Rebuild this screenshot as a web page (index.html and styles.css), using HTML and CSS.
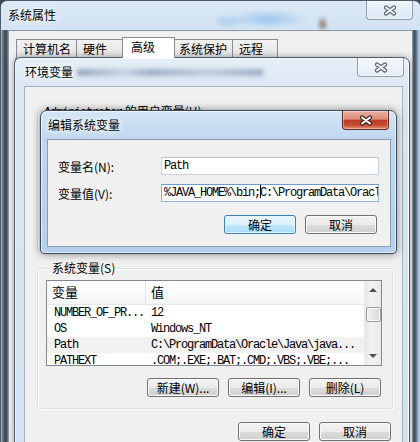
FILE: index.html
```html
<!DOCTYPE html>
<html lang="zh-CN">
<head>
  <meta charset="UTF-8" />
  <meta name="viewport" content="width=device-width, initial-scale=1.0" />
  <title>编辑系统变量</title>
  <link rel="stylesheet" href="styles.css">
</head>
<body>
  <div class="desktop">

    <!-- 系统属性 (back window) -->
    <div class="win win-sys">
      <div class="titlebar">
        <span class="title">系统属性</span>
        <span class="glare"></span>
        <button class="close">
          <svg width="14" height="11" viewBox="0 0 14 11"><path d="M3 2.5 L11 8.5 M11 2.5 L3 8.5" stroke="#5b6470" stroke-width="4.2" stroke-linecap="round"/><path d="M3 2.5 L11 8.5 M11 2.5 L3 8.5" stroke="#f4f6f8" stroke-width="2" stroke-linecap="round"/></svg>
        </button>
      </div>
      <div class="client sys-client">
        <div class="tabs">
          <span class="tab">计算机名</span>
          <span class="tab">硬件</span>
          <span class="tab selected">高级</span>
          <span class="tab">系统保护</span>
          <span class="tab">远程</span>
        </div>
        <div class="tab-panel"></div>
      </div>
    </div>

    <!-- 环境变量 -->
    <div class="win win-env">
      <div class="titlebar">
        <span class="title">环境变量</span>
        <span class="smudge"></span>
        <button class="close">
          <svg width="14" height="11" viewBox="0 0 14 11"><path d="M3 2.5 L11 8.5 M11 2.5 L3 8.5" stroke="#5b6470" stroke-width="4.2" stroke-linecap="round"/><path d="M3 2.5 L11 8.5 M11 2.5 L3 8.5" stroke="#f4f6f8" stroke-width="2" stroke-linecap="round"/></svg>
        </button>
      </div>
      <div class="client env-client">
        <fieldset class="group user-group">
          <legend><span class="mono">Administrator</span> 的用户变量(U)</legend>
        </fieldset>

        <fieldset class="group sys-group">
          <legend>系统变量(S)</legend>
          <div class="listview">
            <div class="lv-main">
              <div class="lv-head">
                <span class="col1">变量</span>
                <span class="col2">值</span>
              </div>
              <div class="lv-row"><span class="col1 mono">NUMBER_OF_PR...</span><span class="col2 mono">12</span></div>
              <div class="lv-row"><span class="col1 mono">OS</span><span class="col2 mono">Windows_NT</span></div>
              <div class="lv-row selected"><span class="col1 mono">Path</span><span class="col2 mono">C:\ProgramData\Oracle\Java\java...</span></div>
              <div class="lv-row"><span class="col1 mono">PATHEXT</span><span class="col2 mono">.COM;.EXE;.BAT;.CMD;.VBS;.VBE;...</span></div>
            </div>
            <div class="vscroll">
              <span class="arrow up"></span>
              <span class="thumb"></span>
              <span class="arrow down"></span>
            </div>
          </div>
          <div class="btn-row group-btns">
            <button class="btn">新建(W)...</button>
            <button class="btn">编辑(I)...</button>
            <button class="btn">删除(L)</button>
          </div>
        </fieldset>

        <div class="btn-row env-btns">
          <button class="btn">确定</button>
          <button class="btn">取消</button>
        </div>
      </div>
    </div>

    <!-- 编辑系统变量 (active dialog) -->
    <div class="win win-edit">
      <div class="titlebar">
        <span class="title">编辑系统变量</span>
        <button class="close close-active">
          <svg width="14" height="11" viewBox="0 0 14 11"><path d="M3 2.5 L11 8.5 M11 2.5 L3 8.5" stroke="#3b2622" stroke-width="4.2" stroke-linecap="round"/><path d="M3 2.5 L11 8.5 M11 2.5 L3 8.5" stroke="#ffffff" stroke-width="2" stroke-linecap="round"/></svg>
        </button>
      </div>
      <div class="client edit-client">
        <div class="field-grid">
          <label class="field-label">变量名(N):</label>
          <div class="textbox mono">Path</div>
          <label class="field-label">变量值(V):</label>
          <div class="textbox mono focused">%JAVA_HOME%\bin;<span class="caret"></span>C:\ProgramData\Oracle\Java\javapath</div>
        </div>
        <div class="btn-row edit-btns">
          <button class="btn btn-default">确定</button>
          <button class="btn">取消</button>
        </div>
      </div>
    </div>

  </div>
</body>
</html>
```

FILE: styles.css
```css
/* Global */
* {
  box-sizing: border-box;
}
body {
  margin: 0;
  font-family: "Noto Sans CJK SC", sans-serif;
  font-size: 12px;
  color: #000;
  background: #3a4450;
}
.desktop {
  position: relative;
  width: 420px;
  height: 442px;
  overflow: hidden;
}
.mono {
  font-family: "Liberation Mono", "Noto Sans CJK SC", monospace;
  font-size: 12px;
  letter-spacing: -1.2px;
}

/* Window frames */
.win {
  position: absolute;
  display: flex;
  flex-direction: column;
  border: 1px solid #4d5a69;
  border-radius: 7px 7px 0 0;
}
.titlebar {
  height: 28px;
  display: flex;
  align-items: flex-start;
  flex-shrink: 0;
}
.title {
  line-height: 28px;
  white-space: nowrap;
  text-shadow: 0 0 5px #fff, 0 0 8px #fff;
}
.close {
  margin-left: auto;
  width: 47px;
  height: 19px;
  padding: 0;
  display: flex;
  align-items: center;
  justify-content: center;
  border: 1px solid rgba(70, 85, 105, 0.55);
  border-top: none;
  border-radius: 0 0 4px 4px;
  background: linear-gradient(rgba(255, 255, 255, 0.55), rgba(255, 255, 255, 0.15));
  box-shadow: inset 0 0 0 1px rgba(255, 255, 255, 0.5);
}
.close-active {
  border-color: #5b2a22;
  background: linear-gradient(#eab0a2 0, #dc8a76 45%, #bd3c24 52%, #c54a30 78%, #e39478 100%);
  box-shadow: inset 0 0 0 1px rgba(255, 220, 210, 0.45);
}
.client {
  flex: 1;
  background: #f0f0f0;
}

/* System properties (outer) */
.win-sys {
  left: 0;
  top: 0;
  width: 421px;
  height: 470px;
  background:
    linear-gradient(90deg, #b9c2cb 0, #5c6773 2px, #3b4652 5px, #8793a0 8px) left top / 8px 100% no-repeat,
    linear-gradient(90deg, #9aa8b5 0, #3c4652 2px, #5e6d7d 4px, #aecbe3 7px) right top / 8px 100% no-repeat,
    #4a5663;
}
.win-sys .titlebar {
  height: 29px;
  border-radius: 6px 6px 0 0;
  background: linear-gradient(#dce9f6, #d2e3f3);
}
.win-sys .title {
  padding-left: 7px;
}
.glare {
  margin-left: 160px;
  width: 130px;
  height: 29px;
  background:
    radial-gradient(ellipse 40px 9px at 40% 62%, rgba(130, 185, 232, 0.7), transparent),
    radial-gradient(ellipse 18px 8px at 8% 70%, rgba(150, 195, 235, 0.6), transparent),
    radial-gradient(ellipse 6px 9px at 82% 80%, rgba(120, 85, 60, 0.7), transparent);
  filter: blur(1px);
}
.win-sys .close {
  margin-left: auto;
  margin-right: 7px;
}
.sys-client {
  margin: 0 7px;
  border: 1px solid #8a96a3;
  border-bottom: none;
  display: flex;
  flex-direction: column;
}
.tabs {
  display: flex;
  align-items: flex-end;
  height: 27px;
  padding-left: 7px;
}
.tab {
  height: 19px;
  line-height: 18px;
  padding-left: 6px;
  border: 1px solid #898c95;
  border-bottom: none;
  margin-right: -1px;
  background: linear-gradient(#f2f2f2, #e3e3e3);
  white-space: nowrap;
}
.tab:nth-child(1) { width: 61px; }
.tab:nth-child(2) { width: 47px; }
.tab:nth-child(3) { width: 53px; }
.tab:nth-child(4) { width: 59px; padding-left: 4px; }
.tab:nth-child(5) { width: 46px; }
.tab.selected {
  height: 21px;
  line-height: 18px;
  padding-left: 8px;
  background: #fff;
  position: relative;
  z-index: 1;
}
.tab-panel {
  flex: 1;
  margin: 0 6px 0 6px;
  border: 1px solid #898c95;
  background: #fff;
}

/* Environment variables window */
.win-env {
  left: 14px;
  top: 57px;
  width: 396px;
  height: 400px;
  background: linear-gradient(#e6eff8, #dbe7f3 30px, #d3e2f1);
  box-shadow: inset 0 0 0 1px rgba(255, 255, 255, 0.7), 0 0 6px rgba(0, 0, 0, 0.35);
}
.win-env .title {
  padding-left: 10px;
}
.smudge {
  margin: 11px 0 0 4px;
  width: 186px;
  height: 7px;
  background: linear-gradient(90deg, rgba(60, 85, 125, 0.45), rgba(90, 115, 150, 0.2) 25%, rgba(60, 85, 125, 0.4) 40%, rgba(90, 115, 150, 0.25) 70%, rgba(60, 85, 125, 0.4));
  filter: blur(2px);
}
.win-env .close {
  margin-right: 5px;
}
.env-client {
  margin: 0 6px 0 9px;
  border: 1px solid #a4b1bf;
  display: flex;
  flex-direction: column;
}
.group {
  margin: 0;
  min-width: 0;
  border: 1px solid #d5dfe5;
  border-radius: 3px;
  box-shadow: inset 1px 1px 0 #fff, 1px 1px 0 #fff;
}
.group legend {
  margin-left: 4px;
  padding: 0 2px;
  line-height: 14px;
}
.user-group {
  margin: 17px 9px 0 12px;
  height: 148px;
  padding: 0;
}
.sys-group {
  margin: 9px 9px 0 12px;
  padding: 5px 10px 11px 8px;
}

/* List view */
.listview {
  display: flex;
  height: 86px;
  border: 1px solid #828790;
  background: #fff;
}
.lv-main {
  flex: 1;
  overflow: hidden;
}
.lv-head {
  display: flex;
  height: 24px;
  background: linear-gradient(#ffffff, #f4f5f7);
  border-bottom: 1px solid #e3e6ea;
}
.lv-head span {
  font-size: 13px;
  line-height: 22px;
}
.lv-head .col1 {
  width: 99px;
  padding-left: 5px;
  border-right: 1px solid #e3e6ea;
}
.lv-head .col2 {
  padding-left: 5px;
}
.lv-row {
  display: flex;
  height: 16px;
  line-height: 16px;
  white-space: nowrap;
}
.lv-row.selected {
  background: #f1f1f1;
}
.lv-row .col1 {
  width: 99px;
  padding-left: 7px;
}
.lv-row .col2 {
  padding-left: 5px;
}
.vscroll {
  width: 17px;
  display: flex;
  flex-direction: column;
  align-items: center;
  background: linear-gradient(90deg, #e6e6e6, #f2f2f2 40%, #eaeaea);
  border-left: 1px solid #ececec;
}
.arrow {
  width: 0;
  height: 0;
  border-left: 4px solid transparent;
  border-right: 4px solid transparent;
}
.arrow.up {
  margin-top: 7px;
  border-bottom: 4px solid #4a4f57;
}
.arrow.down {
  margin-top: auto;
  margin-bottom: 7px;
  border-top: 4px solid #4a4f57;
}
.thumb {
  margin-top: 15px;
  width: 15px;
  height: 15px;
  border: 1px solid #959aa3;
  border-radius: 2px;
  background: linear-gradient(90deg, #f3f3f3, #e6e6e6 50%, #d6d6d6);
  box-shadow: inset 0 0 0 1px #fafafa;
}

/* Buttons */
.btn-row {
  display: flex;
  justify-content: flex-end;
  gap: 9px;
}
.btn {
  width: 72px;
  height: 19px;
  padding: 0;
  font-family: "Noto Sans CJK SC", sans-serif;
  font-size: 12px;
  line-height: 17px;
  color: #000;
  border: 1px solid #707070;
  border-radius: 3px;
  background: linear-gradient(#f2f2f2 0%, #ebebeb 50%, #dddddd 51%, #cfcfcf 100%);
  box-shadow: inset 0 0 0 1px #fbfbfb;
}
.btn-default {
  border-color: #3c7fb1;
  background: linear-gradient(#ebf7fd 0%, #dbf1fc 50%, #c1e7fc 51%, #aadbf6 100%);
  box-shadow: inset 0 0 0 1px #e6f5fd;
}
.group-btns {
  margin-top: 12px;
  padding-right: 1px;
}
.env-btns {
  margin: 13px 11px 0 0;
}

/* Edit system variable dialog */
.win-edit {
  left: 40px;
  top: 110px;
  width: 357px;
  height: 144px;
  border-color: #3b4a5c;
  border-radius: 7px 7px 4px 4px;
  background: linear-gradient(#d4e5f6 0, #c0d7ef 28px, #b6d0ec 100%);
  box-shadow: inset 0 0 0 1px rgba(255, 255, 255, 0.6), 0 0 9px rgba(0, 0, 0, 0.45);
}
.win-edit .title {
  padding-left: 7px;
}
.win-edit .close {
  margin-right: 7px;
}
.edit-client {
  flex: none;
  height: 108px;
  margin: 0 5px 0 6px;
  border: 1px solid #8b9db1;
}
.field-grid {
  display: grid;
  grid-template-columns: 103px 218px;
  row-gap: 9px;
  align-items: center;
  padding: 17px 0 0 10px;
}
.field-label {
  white-space: nowrap;
}
.textbox {
  height: 18px;
  line-height: 16px;
  padding-left: 2px;
  background: #fff;
  border: 1px solid #c9d3dd;
  border-top-color: #b7c3cf;
  white-space: nowrap;
  overflow: hidden;
}
.textbox.focused {
  border-color: #8fb3d9;
  border-top-color: #6f9ccb;
}
.caret {
  display: inline-block;
  width: 1px;
  height: 13px;
  margin: 0 -1px 0 0;
  vertical-align: -2px;
  background: #000;
}
.edit-btns {
  margin-top: 13px;
  padding-right: 13px;
}
```
